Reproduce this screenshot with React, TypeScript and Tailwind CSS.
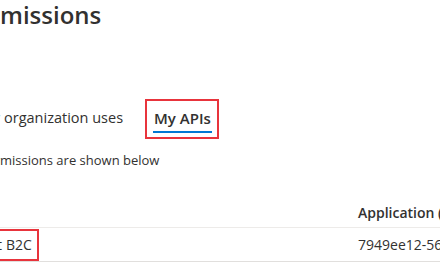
export default function App() {
  return (
    <div
      className="h-[264px] w-[440px] overflow-hidden bg-white text-[#323130]"
      style={{ fontFamily: '"Open Sans", "Noto Sans", sans-serif' }}
    >
      {/* page title */}
      <h1 className="flex h-[30px] items-center whitespace-nowrap text-[24px] font-semibold leading-[30px]">
        <span className="-ml-[500px] w-[500px] shrink-0 text-right">Request API per</span>
        <span>missions</span>
      </h1>

      {/* tabs */}
      <div className="mt-[69px] flex h-[40px] items-stretch whitespace-nowrap text-[14.5px]">
        <div className="flex w-[145px] items-center pb-[2px]">
          <span className="-ml-[500px] w-[500px] shrink-0 text-right">APIs my</span>
          <span className="ml-[4px]">organization uses</span>
        </div>
        <div className="flex h-[40px] w-[74px] items-end border-2 border-[#e8343c] pl-[6px]">
          <span className="mb-[4px] inline-block border-b-2 border-[#0078d4] px-[1px] pb-[4px] text-[15px] font-semibold leading-[18px]">
            My APIs
          </span>
        </div>
      </div>

      {/* description */}
      <p className="mt-[12px] flex whitespace-nowrap text-[13px] leading-[18px]">
        <span className="-ml-[500px] w-[500px] shrink-0 text-right">Applications that expose per</span>
        <span>missions are shown below</span>
      </p>

      {/* table */}
      <div className="mt-[28px] text-[14px]">
        <div className="flex h-[31px] items-center border-b border-[#edebe9] font-semibold">
          <div className="w-[358px] shrink-0" />
          <div className="whitespace-nowrap">Application (client) ID</div>
        </div>
        <div className="flex h-[34px] items-center border-b border-[#e1dfdd]">
          <div className="relative flex h-[33px] w-[358px] shrink-0 items-center whitespace-nowrap">
            <span className="-ml-[500px] w-[502px] shrink-0 text-right">Contoso Tenant</span>
            <span className="ml-[4px]">B2C</span>
            <div className="absolute -left-[20px] top-[1px] h-[32px] w-[59px] border-2 border-[#e8343c]" />
          </div>
          <div className="whitespace-nowrap">7949ee12-56c4-4d2a-9a51-0e3b5f1c8a27</div>
        </div>
      </div>
    </div>
  );
}
